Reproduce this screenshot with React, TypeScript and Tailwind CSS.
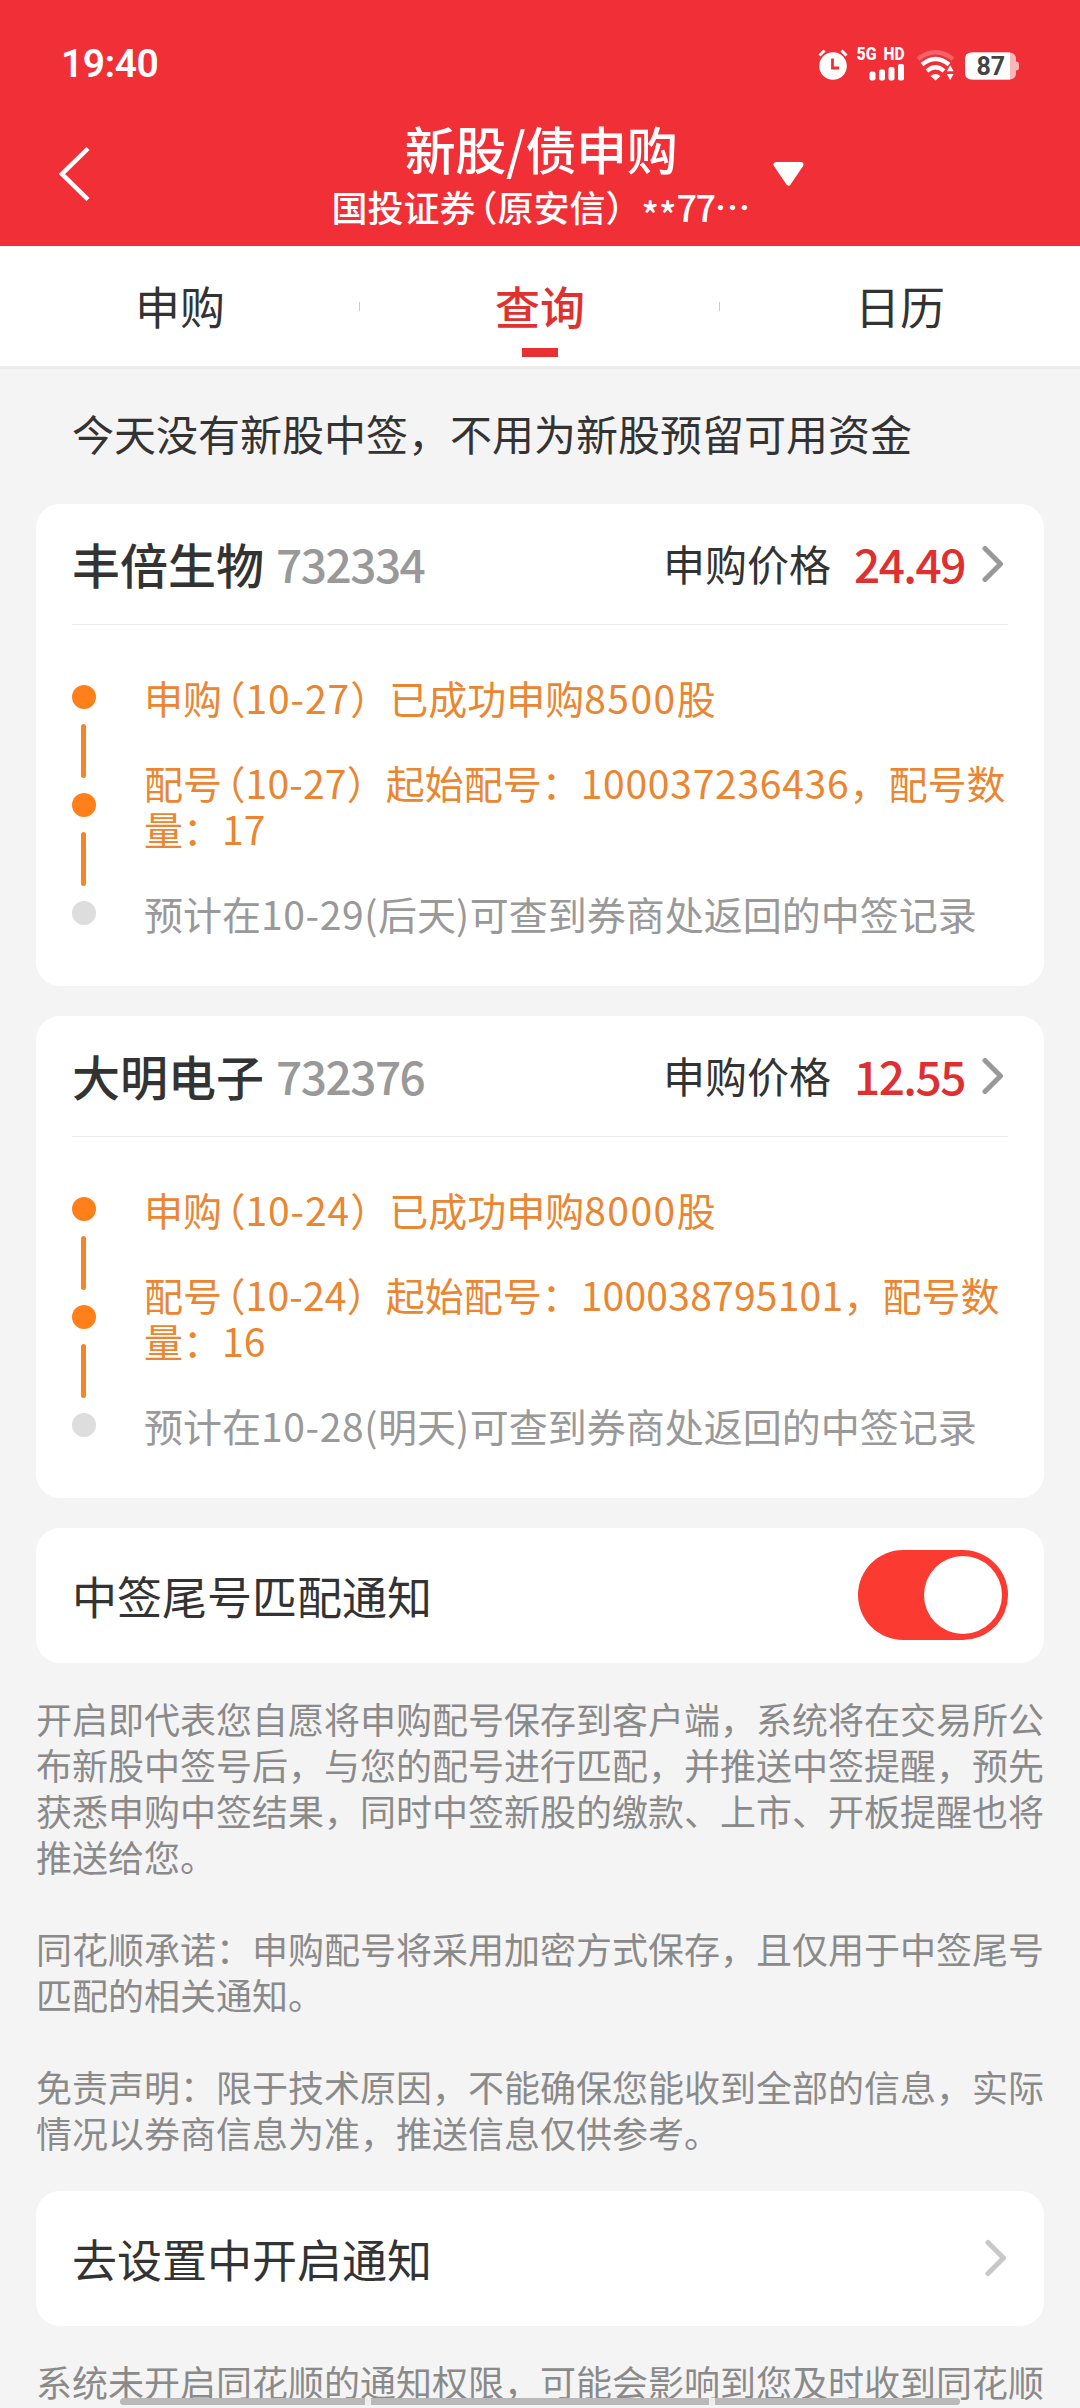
import { useState } from "react";
import clsx from "clsx";

interface Subscription {
  name: string;
  code: string;
  price: string;
  date: string;
  shares: string;
  startNo: string;
  count: string;
  resultDate: string;
  resultDay: string;
  noTracking: string;
}

const subscriptions: Subscription[] = [
  {
    name: "丰倍生物",
    code: "732334",
    price: "24.49",
    date: "10-27",
    shares: "8500",
    startNo: "100037236436",
    count: "17",
    resultDate: "10-29",
    resultDay: "后天",
    noTracking: "tracking-[0.75px]",
  },
  {
    name: "大明电子",
    code: "732376",
    price: "12.55",
    date: "10-24",
    shares: "8000",
    startNo: "100038795101",
    count: "16",
    resultDate: "10-28",
    resultDay: "明天",
    noTracking: "tracking-[0.25px]",
  },
];

const tabs = ["申购", "查询", "日历"];

// half-width opening bracket
function OpenParen() {
  return <span className="ml-1 [font-feature-settings:'halt']">（</span>;
}

function StatusBar() {
  return (
    <div className="flex h-[108px] items-center justify-between pt-5 pl-[61px] pr-[60px]">
      <span className="font-[Roboto] text-[39px] font-semibold leading-none tracking-[-0.5px]">19:40</span>
      <svg className="mt-[-6px]" width="202" height="42" viewBox="0 -6 202 42" fill="none">
        {/* alarm */}
        <circle cx="15" cy="20" r="13.800" fill="#fff" />
        <path d="M1.500 9.500l5-5M28.500 9.500l-5-5" stroke="#fff" strokeWidth="3" />
        <path d="M14.500 12.500V22H21" stroke="#f12f37" strokeWidth="2.800" />
        {/* signal */}
        <text x="38.500" y="14" fill="#fff" fontSize="17.500" fontWeight="800" fontFamily="Roboto" textLength="20" lengthAdjust="spacingAndGlyphs">
          5G
        </text>
        <text x="65.500" y="14" fill="#fff" fontSize="17.500" fontWeight="800" fontFamily="Roboto" textLength="21" lengthAdjust="spacingAndGlyphs">
          HD
        </text>
        <rect x="51.500" y="25.500" width="6" height="9" rx="2" fill="#fff" />
        <rect x="61" y="23.500" width="6" height="11" rx="2" fill="#fff" />
        <rect x="70.500" y="21" width="6" height="13.500" rx="2" fill="#fff" />
        <rect x="80" y="18" width="6" height="16.500" rx="2" fill="#fff" />
        {/* wifi */}
        <path d="M100 13q17.500-13.500 35 0" stroke="#fff" strokeOpacity="0.25" strokeWidth="4.500" />
        <path d="M104 18.500q13.500-11 27 0" stroke="#fff" strokeWidth="4.200" />
        <path d="M109 25q8.500-7.500 17 0" stroke="#fff" strokeWidth="4.200" />
        <path d="M112.500 30q5-4 10 0l-5 4.500z" fill="#fff" />
        <path d="M128.800 25.200l3.400-6 3.400 6zM128.800 28h6.800l-3.400 6z" fill="#fff" />
        {/* battery */}
        <path
          d="M154 6.500h38a6 6 0 0 1 6 6v3q3 0 3 3v3q0 3-3 3v3a6 6 0 0 1-6 6h-38z"
          fill="#fff"
          fillOpacity="0.65"
        />
        <path d="M153 6.500h39v27h-39a6 6 0 0 1-6-6v-15a6 6 0 0 1 6-6z" fill="#fff" />
        <text x="158.500" y="29.300" fill="#444" fontSize="25" fontWeight="700" fontFamily="Roboto">
          87
        </text>
      </svg>
    </div>
  );
}

function Header() {
  return (
    <header className="h-[246px] bg-[#f12f37] text-white">
      <StatusBar />
      <div className="flex h-[138px]">
        <svg className="ml-[57px] mt-[37px]" width="36" height="58" viewBox="0 0 36 58" fill="none">
          <path d="M31 3.500L5 29l26 25.500" stroke="#fff" strokeWidth="4.500" />
        </svg>
        <div className="ml-[238px] flex w-[420px] flex-col items-center font-medium whitespace-nowrap">
          <h1 className="pt-2.5 text-[51px] leading-[60px] tracking-[-0.4px]">新股/债申购</h1>
          <p className="pt-[5px] text-[36px] leading-[46px]">
            国投证券
            <OpenParen />
            原安信）<span className="relative top-[7px]">**</span>
            <span className="tracking-[-1.5px]">77</span>…
          </p>
        </div>
        <svg className="ml-[21px] mt-[53px]" width="33" height="26" viewBox="0 0 33 26">
          <path
            d="M4 3.500h25L16.500 22z"
            fill="#fff"
            stroke="#fff"
            strokeWidth="5"
            strokeLinejoin="round"
          />
        </svg>
      </div>
    </header>
  );
}

function Chevron({ className }: { className: string }) {
  return (
    <svg className={className} width="24" height="38" viewBox="0 0 24 38" fill="none">
      <path
        d="M4 3.500L19.500 19 4 34.500"
        stroke="currentColor"
        strokeWidth="5"
        strokeLinecap="round"
        strokeLinejoin="round"
      />
    </svg>
  );
}

function TimelineLine() {
  return <span className="my-[15px] mr-px h-[54px] w-[5px] rounded-full bg-[#f58529]" />;
}

function SubscriptionCard({ item }: { item: Subscription }) {
  return (
    <section className="h-[482px] rounded-3xl bg-white px-9">
      <div className="flex h-[121px] items-center border-b border-[#ebebeb] text-[#333]">
        <h2 className="pb-0.5 text-[48px] font-medium leading-none">{item.name}</h2>
        <span className="ml-3 pb-[3px] text-[46px] font-medium leading-none tracking-[-1.5px] text-[#999]">
          {item.code}
        </span>
        <span className="ml-auto pb-0.5 text-[42px] leading-none">申购价格</span>
        <span className="ml-[22px] w-[112px] pb-[3px] text-right text-[46px] font-medium leading-none tracking-[-1.5px] text-[#df3031]">
          {item.price}
        </span>
        <Chevron className="ml-4 mr-[3px] text-[#999]" />
      </div>
      <div className="flex pt-[49px]">
        <div className="flex w-6 flex-col items-center pt-[11px]">
          <span className="size-6 rounded-full bg-[#ff801a]" />
          <TimelineLine />
          <span className="size-6 rounded-full bg-[#ff801a]" />
          <TimelineLine />
          <span className="size-6 rounded-full bg-[#ddd]" />
        </div>
        <div className="ml-12 text-[39px] leading-[46px] text-[#ea8632] whitespace-nowrap">
          <p>
            申购
            <OpenParen />
            <span className="tracking-[0.9px]">{item.date}</span>）已成功申购
            <span className="tracking-[1.5px]">{item.shares}</span>股
          </p>
          <p className="mt-[39px]">
            配号
            <OpenParen />
            <span className="tracking-[0.2px]">{item.date}</span>）起始配号：
            <span className={item.noTracking}>{item.startNo}</span>，配号数
            <br />
            {`量：${item.count}`}
          </p>
          <p className="mt-[39px] text-[#999]">
            预计在<span className="tracking-[0.6px]">{item.resultDate}(</span>
            {item.resultDay}
            <span className="tracking-[0.6px]">)</span>可查到券商处返回的中签记录
          </p>
        </div>
      </div>
    </section>
  );
}

export default function App() {
  const [active, setActive] = useState("查询");
  const [matchNotice, setMatchNotice] = useState(true);

  return (
    <div className="relative h-[2408px] w-[1080px] overflow-hidden bg-[#f4f4f4] font-['Noto_Sans_CJK_SC',sans-serif]">
      <Header />

      <nav className="flex h-[123px] items-center border-b-[3px] border-[#ececec] bg-white">
        {tabs.map((tab, i) => (
          <div key={tab} className="flex h-full flex-1 items-center">
            <button
              onClick={() => setActive(tab)}
              className={clsx(
                "flex h-full flex-1 flex-col items-center pt-[30px] text-[45px] leading-[60px]",
                tab === active ? "font-medium text-[#e03131]" : "text-[#333]"
              )}
            >
              {tab}
              {tab === active && <span className="mt-3 h-[9px] w-9 bg-[#e93030]" />}
            </button>
            {i < tabs.length - 1 && <span className="-ml-px h-[9px] w-px bg-[#ccc]" />}
          </div>
        ))}
      </nav>

      <main className="px-9">
        <p className="pt-[34px] pl-9 text-[42px] leading-[60px] text-[#333]">
          今天没有新股中签，不用为新股预留可用资金
        </p>

        <div className="mt-[41px] flex flex-col gap-[30px]">
          {subscriptions.map((item) => (
            <SubscriptionCard key={item.code} item={item} />
          ))}

          <section className="flex h-[135px] items-center justify-between rounded-3xl bg-white px-9">
            <span className="text-[45px] leading-none text-[#333]">中签尾号匹配通知</span>
            <button
              onClick={() => setMatchNotice(!matchNotice)}
              className={clsx(
                "mb-px flex h-[90px] w-[150px] items-center rounded-full px-1.5",
                matchNotice ? "justify-end bg-[#fb3b31]" : "justify-start bg-[#ddd]"
              )}
            >
              <span className="size-[78px] rounded-full bg-white" />
            </button>
          </section>
        </div>

        <div className="flex flex-col gap-[46px] pt-8 text-[36px] leading-[46px] text-[#8a8a8a]">
          <p>
            开启即代表您自愿将申购配号保存到客户端，系统将在交易所公布新股中签号后，与您的配号进行匹配，并推送中签提醒，预先获悉申购中签结果，同时中签新股的缴款、上市、开板提醒也将推送给您。
          </p>
          <p>同花顺承诺：申购配号将采用加密方式保存，且仅用于中签尾号匹配的相关通知。</p>
          <p>免责声明：限于技术原因，不能确保您能收到全部的信息，实际情况以券商信息为准，推送信息仅供参考。</p>
        </div>

        <section className="mt-9 flex h-[135px] items-center justify-between rounded-3xl bg-white pr-9 pl-9">
          <span className="text-[45px] leading-none text-[#333]">去设置中开启通知</span>
          <Chevron className="mb-0.5 text-[#c8c8c8]" />
        </section>

        <p className="pt-8 text-[36px] leading-[46px] text-[#8a8a8a] whitespace-nowrap">
          系统未开启同花顺的通知权限，可能会影响到您及时收到同花顺
        </p>
      </main>

      {/* system gesture bar */}
      <div className="absolute bottom-[3px] left-[120px] flex h-[7px] w-[840px] gap-1.5 overflow-hidden rounded-full bg-[#eee]">
        <span className="w-[245px] bg-[#b9b9b9]" />
        <span className="w-[338px] bg-[#b9b9b9]" />
        <span className="flex-1 bg-[#b9b9b9]" />
      </div>
    </div>
  );
}
